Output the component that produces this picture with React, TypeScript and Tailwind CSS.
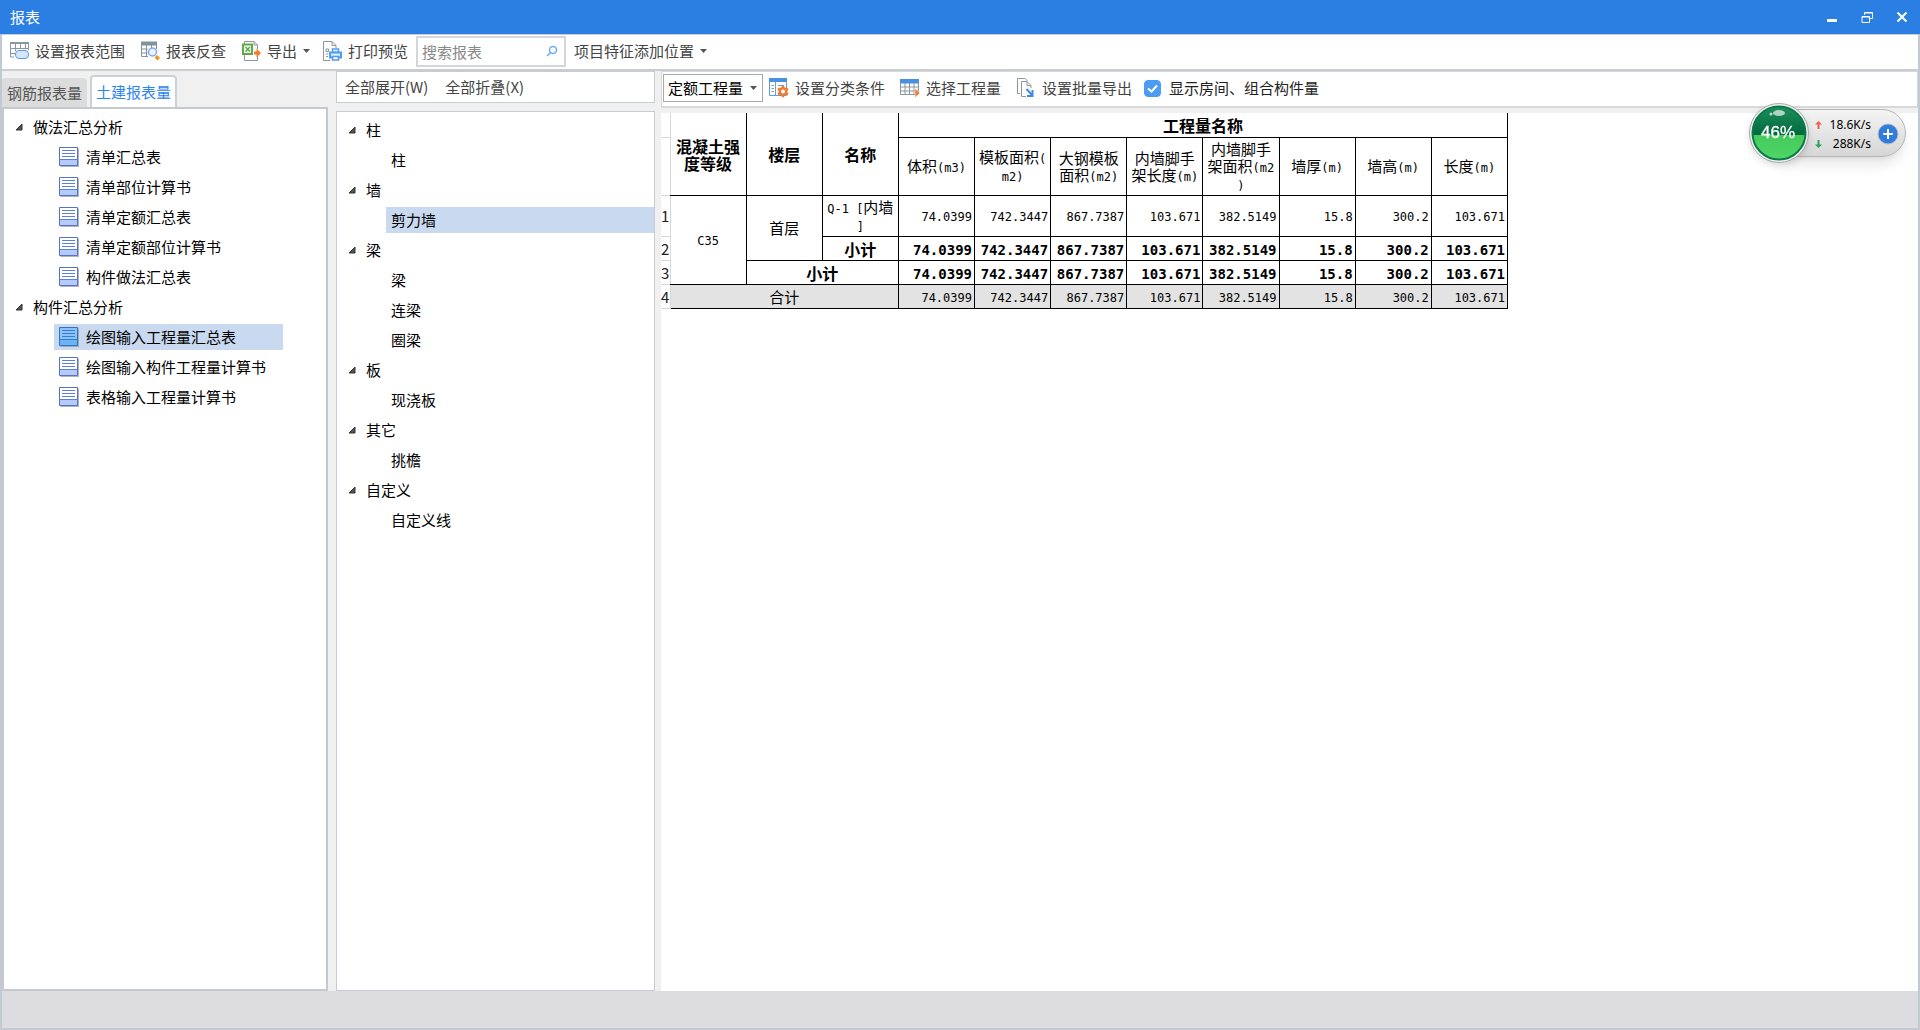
import { useState, type ReactNode } from "react"

const billReports = ["清单汇总表", "清单部位计算书", "清单定额汇总表", "清单定额部位计算书", "构件做法汇总表"]
const componentReports = ["绘图输入工程量汇总表", "绘图输入构件工程量计算书", "表格输入工程量计算书"]

const reportTree = [
  { name: "做法汇总分析", children: billReports },
  { name: "构件汇总分析", children: componentReports },
]

const componentTree = [
  { name: "柱", children: ["柱"] },
  { name: "墙", children: ["剪力墙"] },
  { name: "梁", children: ["梁", "连梁", "圈梁"] },
  { name: "板", children: ["现浇板"] },
  { name: "其它", children: ["挑檐"] },
  { name: "自定义", children: ["自定义线"] },
]

// each line is [chinese part, latin part]
const quantityHeads = [
  [["体积", "(m3)"]],
  [["模板面积", "("], ["", "m2)"]],
  [["大钢模板", ""], ["面积", "(m2)"]],
  [["内墙脚手", ""], ["架长度", "(m)"]],
  [["内墙脚手", ""], ["架面积", "(m2"], ["", ")"]],
  [["墙厚", "(m)"]],
  [["墙高", "(m)"]],
  [["长度", "(m)"]],
]

const values = ["74.0399", "742.3447", "867.7387", "103.671", "382.5149", "15.8", "300.2", "103.671"]

function GridRangeIcon() {
  return (
    <svg className="h-5 w-5 shrink-0" viewBox="0 0 20 20" fill="none">
      <path d="M1 2.500h18M1 7.500h18M1 12.500h5M1.500 2v14H5M6.500 2v8M11.500 2v6M16.500 2v6M19.500 2v7" stroke="#8b979f" />
      <path d="M1 1h19v2H1z" fill="#8b979f" />
      <rect x="6.500" y="9.500" width="13" height="8" rx="3.500" fill="#d6e6fb" stroke="#5b9be8" />
    </svg>
  )
}

function TableSearchIcon() {
  return (
    <svg className="h-5 w-5 shrink-0" viewBox="0 0 20 20" fill="none">
      <path d="M1 .5h16v4H1z" fill="#84929b" />
      <path d="M1.500 4v11.500H8M1.500 8h6M1.500 12h6M6.500 4v11M11.500 4v3M16.500 4v4" stroke="#84929b" />
      <circle cx="12.500" cy="11" r="4" fill="#eaf3ff" stroke="#7fa9ee" strokeWidth="1.500" />
      <path d="M14.500 16.500l2.500-2.500 3 3-2.500 2.500z" fill="#f29222" />
    </svg>
  )
}

function ExportIcon() {
  return (
    <svg className="h-5 w-5 shrink-0" viewBox="0 0 20 20" fill="none">
      <path d="M3.500 3V.5h9.500L16.500 4v4M16.500 15v4.500h-13V14M13 .5V4h3.500" stroke="#8b979f" />
      <rect x="2" y="3.500" width="9" height="9.500" fill="#f2faee" stroke="#62a84b" strokeWidth="2" />
      <path d="M4.500 6l4.500 4.500M9 6l-4.500 4.500" stroke="#62a84b" strokeWidth="1.500" />
      <path d="M13 10.500h2.500V7.500l4.500 4.500-4.500 4.500v-3H13z" fill="#f27b2d" />
    </svg>
  )
}

function PrintPreviewIcon() {
  return (
    <svg className="h-5 w-5 shrink-0" viewBox="0 0 20 20" fill="none">
      <path d="M8 19.500H1.500V.5H10l4 4V7M10 .5v4h4" stroke="#8b979f" />
      <path d="M4 8h2.500v2.500H4zM4 13h2M4 15.500h2" stroke="#8b979f" />
      <path d="M8 11.500h11v5H8z" stroke="#4f9cf0" strokeWidth="2" fill="#dcebfc" />
      <path d="M10.500 8h6v3h-6zM10.500 15.500h6v3.500h-6z" fill="#fff" stroke="#4f9cf0" strokeWidth="1.500" />
    </svg>
  )
}

function ClassifyIcon() {
  return (
    <svg className="h-5 w-5 shrink-0" viewBox="0 0 20 20" fill="none">
      <path d="M.5.5h17v17H.5z" fill="#fff" stroke="#5b9be8" />
      <path d="M0 0h18v4H0z" fill="#4a90e2" />
      <path d="M6.500 4v13M2.500 7.500H5M2.500 10.500H5M2.500 13.500H5M9 7.500h6" stroke="#7d9dbd" />
      <path
        d="M14 7.800v11.400M9 10.600l10 5.800M9 16.400l10-5.800"
        stroke="#f27b2d"
        strokeWidth="2.500"
      />
      <circle cx="14" cy="13.500" r="3.300" fill="#fff" stroke="#f27b2d" strokeWidth="2.500" />
    </svg>
  )
}

function PickTableIcon() {
  return (
    <svg className="h-5 w-5 shrink-0" viewBox="0 0 20 20" fill="none">
      <path d="M.5 1.500h18v15H.5z" fill="#fff" stroke="#8b979f" />
      <path d="M.5 9h18M.5 13h18M5 5v11M9.500 5v11M14 5v11" stroke="#8b979f" />
      <path d="M0 1h19v4.500H0z" fill="#4a90e2" />
      <path d="M15 10.500l5 4.500-5 4.500z" fill="#f27b2d" stroke="#fff" strokeWidth=".5" />
    </svg>
  )
}

function BatchExportIcon() {
  return (
    <svg className="h-5 w-5 shrink-0" viewBox="0 0 20 20" fill="none">
      <path d="M4 15.500H1.500V.5H9L11.500 3" stroke="#8b979f" />
      <path d="M10 18.500H5.500V3.500H11l4 4V10M11 3.500v4h4" stroke="#8b979f" fill="#fff" />
      <path d="M10.500 11l5.500 6M16.500 12v6H11" stroke="#3f8ae0" strokeWidth="2" />
    </svg>
  )
}

function ReportIcon({ active }: { active: boolean }) {
  return (
    <svg className="h-5 w-5 shrink-0" viewBox="0 0 20 20" fill="none">
      <path d="M1.500 1.500H20V20H1.500z" fill="#8d9198" opacity=".7" />
      <path d="M.5.5h18v18H.5z" fill={active ? "#8fc3f7" : "#fff"} stroke={active ? "#2f74c0" : "#5472c8"} />
      <path d="M1 13h17v5H1z" fill={active ? "#6cb2f5" : "#b5cbfb"} />
      <path d="M1 12.500h17M3 3.500h13M3 6.500h13M3 9.500h13" stroke={active ? "#2f7fd6" : "#5b7fdd"} />
    </svg>
  )
}

function Caret() {
  return (
    <svg className="h-1 w-[7px] shrink-0" viewBox="0 0 7 4">
      <path d="M0 0h7L3.500 4z" fill="#555" />
    </svg>
  )
}

function TreeArrow() {
  return (
    <svg className="h-2 w-2 shrink-0" viewBox="0 0 8 8">
      <path d="M7 1v6H1z" fill="#555" stroke="#333" />
    </svg>
  )
}

function ToolButton({ icon, label, menu }: { icon?: ReactNode; label: string; menu?: boolean }) {
  return (
    <button type="button" className="flex h-7 items-center gap-1.5 whitespace-nowrap text-[#444]">
      {icon}
      <span>{label}</span>
      {menu && <Caret />}
    </button>
  )
}

function TitleBar() {
  return (
    <header className="flex h-[34px] items-center justify-between bg-[#2b7fe2] pr-3 pl-2.5 text-white">
      <h1>报表</h1>
      <div className="flex items-center gap-[23px]">
        <button type="button" aria-label="最小化">
          <svg className="h-3 w-3" viewBox="0 0 12 12">
            <path d="M1 8h10v3H1z" fill="#fff" />
          </svg>
        </button>
        <button type="button" aria-label="还原">
          <svg className="h-3 w-3" viewBox="0 0 12 12" fill="none" stroke="#fff">
            <path d="M3.500 4V1.500h8v6H9M3.500 2h8" />
            <path d="M1 5.500h7.500v6H1zM1 6h7.500" />
          </svg>
        </button>
        <button type="button" aria-label="关闭">
          <svg className="h-3 w-3" viewBox="0 0 12 12" stroke="#fff" strokeWidth="2">
            <path d="M1.500 1.500l9 9M10.500 1.500l-9 9" />
          </svg>
        </button>
      </div>
    </header>
  )
}

function Toolbar() {
  return (
    <div className="flex h-[37px] items-center gap-[15px] border-t border-b-2 border-[#c9cdd2] bg-white pb-0.5 pl-[7px]">
      <ToolButton icon={<GridRangeIcon />} label="设置报表范围" />
      <ToolButton icon={<TableSearchIcon />} label="报表反查" />
      <div className="flex items-center gap-3">
        <ToolButton icon={<ExportIcon />} label="导出" menu />
        <div className="flex items-center gap-2">
          <ToolButton icon={<PrintPreviewIcon />} label="打印预览" />
          <label className="flex h-[31px] w-[150px] items-center border-2 border-[#d3d7db] px-1">
            <span className="sr-only">搜索报表</span>
            <input
              type="text"
              placeholder="搜索报表"
              className="h-[27px] min-w-0 flex-1 leading-[27px] outline-none placeholder:text-[#888]"
            />
            <svg className="mr-0.5 h-3 w-3" viewBox="0 0 12 12" fill="none" stroke="#6aaef5" strokeWidth="1.500">
              <circle cx="7" cy="5" r="3.500" />
              <path d="M4.500 7.500L1 11" />
            </svg>
          </label>
          <ToolButton label="项目特征添加位置" menu />
        </div>
      </div>
    </div>
  )
}

function ReportPanel() {
  const [selected, setSelected] = useState(componentReports[0])
  return (
    <section className="flex w-[326px] flex-col pt-1">
      <div className="flex h-8 items-end gap-[3px]">
        <button type="button" className="h-[29px] w-[85px] rounded-t bg-[#dcdcdc] text-[#555]">
          钢筋报表量
        </button>
        <button
          type="button"
          className="h-8 w-[87px] rounded-t border-2 border-b-0 border-[#ccd0d8] bg-white text-[#2e86ec]"
        >
          土建报表量
        </button>
      </div>
      <ul className="flex-1 border-2 border-[#c3c9cf] bg-white pt-[3px]">
        {reportTree.map((group) => (
          <li key={group.name}>
            <div className="flex h-[30px] items-center gap-2.5 pl-[11px]">
              <TreeArrow />
              {group.name}
            </div>
            <ul>
              {group.children.map((name) => (
                <li key={name} className="flex h-[30px] items-center pl-[50px]">
                  <button
                    type="button"
                    onClick={() => setSelected(name)}
                    className={`flex h-[26px] w-[229px] items-center gap-[7px] pl-[5px] whitespace-nowrap ${
                      selected === name ? "bg-[#c9d9f0]" : ""
                    }`}
                  >
                    <ReportIcon active={selected === name} />
                    {name}
                  </button>
                </li>
              ))}
            </ul>
          </li>
        ))}
      </ul>
    </section>
  )
}

function ComponentPanel() {
  const [selected, setSelected] = useState("剪力墙")
  return (
    <section className="flex w-[319px] flex-col gap-2">
      <div className="flex h-8 items-center gap-[17px] border border-[#c9cdd2] bg-white pl-2 text-[#444]">
        <button type="button">全部展开(W)</button>
        <button type="button">全部折叠(X)</button>
      </div>
      <ul className="flex-1 border border-[#c6ccd2] bg-white pt-[3px]">
        {componentTree.map((group) => (
          <li key={group.name}>
            <div className="flex h-[30px] items-center gap-2.5 pl-[11px]">
              <TreeArrow />
              {group.name}
            </div>
            <ul>
              {group.children.map((name) => (
                <li key={name} className="flex h-[30px] items-center pl-[49px]">
                  <button
                    type="button"
                    onClick={() => setSelected(name)}
                    className={`h-[26px] flex-1 pl-[5px] text-left ${selected === name ? "bg-[#c9d9f0]" : ""}`}
                  >
                    {name}
                  </button>
                </li>
              ))}
            </ul>
          </li>
        ))}
      </ul>
    </section>
  )
}

function QuantityToolbar() {
  return (
    <div className="flex h-[37px] items-center border border-b-2 border-[#d6d8dc] bg-white pb-0.5 pl-px">
      <label className="relative flex items-center">
        <span className="sr-only">工程量类型</span>
        <select className="h-7 w-[100px] appearance-none border border-[#a9a9a9] bg-white pl-1 text-[15px] leading-[26px] text-black">
          <option>定额工程量</option>
        </select>
        <span className="pointer-events-none absolute right-1.5">
          <Caret />
        </span>
      </label>
      <div className="ml-1.5 flex items-center gap-[15px]">
        <ToolButton icon={<ClassifyIcon />} label="设置分类条件" />
        <ToolButton icon={<PickTableIcon />} label="选择工程量" />
        <ToolButton icon={<BatchExportIcon />} label="设置批量导出" />
      </div>
      <label className="ml-3 flex items-center gap-2 text-[#222]">
        <span className="relative flex h-[17px] w-[17px]">
          <input
            type="checkbox"
            defaultChecked
            className="peer h-[17px] w-[17px] appearance-none rounded-sm border border-[#4a9cf5] checked:bg-[#4a9cf5]"
          />
          <svg
            className="pointer-events-none absolute inset-0 hidden peer-checked:block"
            viewBox="0 0 17 17"
            fill="none"
            stroke="#fff"
            strokeWidth="2"
          >
            <path d="M4 8.500l3.500 3 5.500-6" />
          </svg>
        </span>
        显示房间、组合构件量
      </label>
    </div>
  )
}

const cell = "border border-black p-0 pt-1"
const gutter =
  "border-y border-r border-[#d8d8d8] p-0 text-left font-['Noto_Sans_CJK_SC',sans-serif] text-[15px] font-normal text-[#222]"

function ValueCells({ bold }: { bold?: boolean }) {
  return values.map((value, i) => (
    <td key={i} className={`${cell} pr-0.5 text-right ${bold ? "text-[14px] font-bold" : "text-[12px]"}`}>
      {value}
    </td>
  ))
}

function QuantityTable() {
  return (
    <table className="w-[847px] table-fixed border-collapse font-['DejaVu_Sans_Mono','Noto_Sans_CJK_SC',monospace] leading-[17px] text-black">
      <colgroup>
        <col className="w-[9px]" />
        <col span={11} />
      </colgroup>
      <thead className="text-center">
        <tr className="h-6 text-[16px]">
          <td className={`${gutter} border-t-0`} />
          <th rowSpan={2} className={`${cell} border-t-0 border-l-0`}>
            混凝土强
            <br />
            度等级
          </th>
          <th rowSpan={2} className={`${cell} border-t-0`}>楼层</th>
          <th rowSpan={2} className={`${cell} border-t-0`}>名称</th>
          <th colSpan={8} className={`${cell} border-t-0`}>工程量名称</th>
        </tr>
        <tr className="h-[58px] text-[15px]">
          <td className={gutter} />
          {quantityHeads.map((lines, i) => (
            <th key={i} className={`${cell} font-normal whitespace-nowrap`}>
              {lines.map(([zh, latin], j) => (
                <div key={j}>
                  {zh}
                  {latin && <span className="text-[12px]">{latin}</span>}
                </div>
              ))}
            </th>
          ))}
        </tr>
      </thead>
      <tbody className="text-center text-[15px]">
        <tr className="h-[41px]">
          <th className={gutter}>1</th>
          <td rowSpan={3} className={`${cell} border-l-0 text-[12px]`}>C35</td>
          <td rowSpan={2} className={cell}>首层</td>
          <td className={`${cell} whitespace-nowrap`}>
            <span className="text-[12px]">Q-1 [</span>内墙
            <br />
            <span className="text-[12px]">]</span>
          </td>
          <ValueCells />
        </tr>
        <tr className="h-6">
          <th className={gutter}>2</th>
          <td className={`${cell} text-[16px] font-bold`}>小计</td>
          <ValueCells bold />
        </tr>
        <tr className="h-6">
          <th className={gutter}>3</th>
          <td colSpan={2} className={`${cell} text-[16px] font-bold`}>小计</td>
          <ValueCells bold />
        </tr>
        <tr className="h-6 bg-[#e3e3e3]">
          <th className={`${gutter} bg-white`}>4</th>
          <td colSpan={3} className={`${cell} border-l-0`}>合计</td>
          <ValueCells />
        </tr>
      </tbody>
    </table>
  )
}

function SpeedWidget() {
  return (
    <aside className="absolute top-[103px] right-3.5 flex h-[60px] items-center font-['Noto_Sans',sans-serif] text-[12px] text-black">
      <svg className="relative z-10 h-[60px] w-[62px] drop-shadow-md" viewBox="0 0 62 60">
        <defs>
          <linearGradient id="ball" x1="0" y1="0" x2="0" y2="1">
            <stop offset="0" stopColor="#1d8f5c" />
            <stop offset=".5" stopColor="#046b41" />
            <stop offset=".53" stopColor="#046b41" />
            <stop offset=".53" stopColor="#45c95c" />
            <stop offset="1" stopColor="#4fd667" />
          </linearGradient>
        </defs>
        <circle cx="31" cy="30" r="29.500" fill="#eee" stroke="#aaa" />
        <circle cx="31" cy="30" r="26.500" fill="url(#ball)" stroke="#0b7a4a" strokeWidth="2" />
        <ellipse cx="31" cy="10" rx="6" ry="3" fill="#fff" opacity=".65" />
        <circle cx="23" cy="11" r="1.500" fill="#fff" opacity=".7" />
        <text x="30" y="35" fill="#fff" stroke="#fff" strokeWidth=".3" fontSize="17" textAnchor="middle" fontFamily="Liberation Sans">
          46%
        </text>
      </svg>
      <div className="-ml-8 flex h-12 w-[128px] items-center rounded-r-full border border-[#b5b5b5] bg-linear-to-b from-[#f4f4f4] to-[#d6d6d6] pt-0.5 pl-9 shadow-lg">
        <div className="flex w-14 flex-col">
          <div className="flex h-[19px] items-center justify-between whitespace-nowrap">
            <svg className="h-2 w-[7px] shrink-0" viewBox="0 0 7 8">
              <path d="M3.500 0L7 3.500H4.500V8h-2V3.500H0z" fill="#ee6248" />
            </svg>
            18.6K/s
          </div>
          <div className="flex h-[19px] items-center justify-between whitespace-nowrap">
            <svg className="h-2 w-[7px] shrink-0" viewBox="0 0 7 8">
              <path d="M3.500 8L0 4.500h2.500V0h2v4.500H7z" fill="#2ba55d" />
            </svg>
            288K/s
          </div>
        </div>
        <button type="button" aria-label="加速" className="ml-1.5">
          <svg className="h-[22px] w-[22px]" viewBox="0 0 22 22">
            <circle cx="11" cy="11" r="10" fill="#2f7de0" stroke="#bbb" />
            <path d="M11 6v10M6 11h10" stroke="#fff" strokeWidth="2" />
          </svg>
        </button>
      </div>
    </aside>
  )
}

export default function App() {
  return (
    <div className="relative flex min-h-screen flex-col bg-[#f0f0f0] font-['Noto_Sans_CJK_SC',sans-serif] text-[15px] leading-5 text-black">
      <TitleBar />
      <div className="flex flex-1 flex-col border-x-2 border-b-2 border-[#c3c8d2]">
        <Toolbar />
        <main className="flex flex-1">
          <ReportPanel />
          <div className="ml-2 flex">
            <ComponentPanel />
          </div>
          <section className="ml-[6px] flex min-w-0 flex-1 flex-col">
            <QuantityToolbar />
            <div className="mt-[5px] flex-1 bg-white">
              <QuantityTable />
            </div>
          </section>
        </main>
        <footer className="h-[37px] bg-[#dddddf]" />
      </div>
      <SpeedWidget />
    </div>
  )
}
